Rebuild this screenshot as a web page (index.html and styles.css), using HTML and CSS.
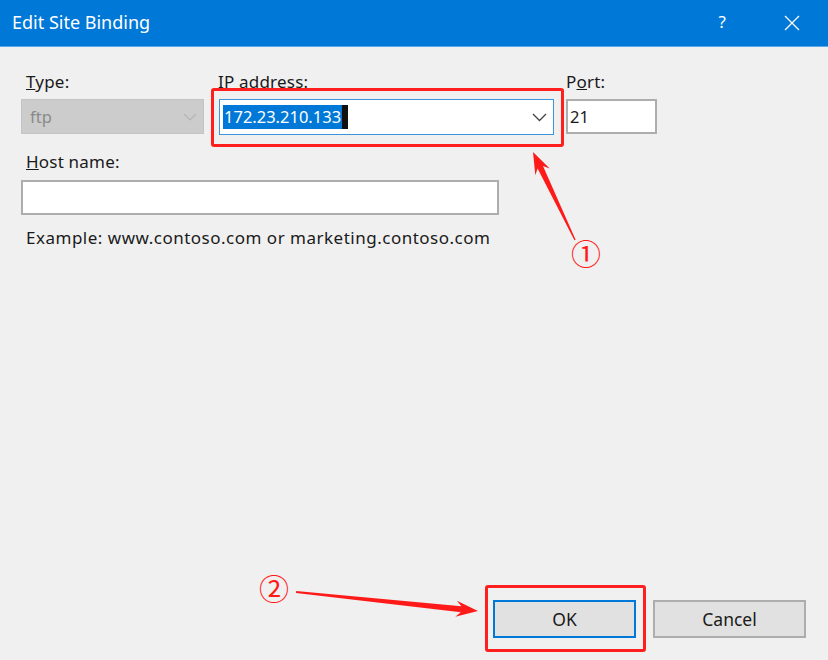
FILE: index.html
```html
<!DOCTYPE html>
<html>
<head>
<meta charset="utf-8">
<link rel="stylesheet" href="styles.css">
</head>
<body>
<div class="window">
  <div class="titlebar">
    <span class="title">Edit Site Binding</span>
    <span class="tb-actions">
      <span class="tb-help">?</span>
      <svg class="tb-close" width="16" height="16" viewBox="0 0 16 16"><path d="M1 1 L15 15 M15 1 L1 15" stroke="#fff" stroke-width="1.3" fill="none"/></svg>
    </span>
  </div>
  <div class="content">
    <div class="row">
      <div class="field f-type">
        <label class="lbl"><u>T</u>ype:</label>
        <div class="combo disabled">
          <span class="val">ftp</span>
          <svg class="chev" width="14" height="8" viewBox="0 0 14 8"><path d="M1 1 L7 7 L13 1" stroke="#b4b4b4" stroke-width="1.2" fill="none"/></svg>
        </div>
      </div>
      <div class="field f-ip">
        <label class="lbl"><u>I</u>P address:</label>
        <div class="combo focused">
          <span class="val"><span class="sel">172.23.210.133</span><span class="caret"></span></span>
          <svg class="chev" width="15" height="9" viewBox="0 0 15 9"><path d="M1 1 L7.5 7.5 L14 1" stroke="#444" stroke-width="1.3" fill="none"/></svg>
        </div>
      </div>
      <div class="field f-port">
        <label class="lbl">P<u>o</u>rt:</label>
        <div class="textbox"><span class="val">21</span></div>
      </div>
    </div>
    <div class="field f-host">
      <label class="lbl"><u>H</u>ost name:</label>
      <div class="textbox"></div>
    </div>
    <div class="example">Example: www.contoso.com or marketing.contoso.com</div>
  </div>
  <div class="buttons">
    <button class="btn btn-ok">OK</button>
    <button class="btn">Cancel</button>
  </div>

  <div class="mark mark-ip"></div>
  <div class="mark mark-ok"></div>
  <span class="num num1">①</span>
  <span class="num num2">②</span>
  <svg class="arrows" width="828" height="660" viewBox="0 0 828 660">
    <polygon fill="#ff1a1a" points="533,152 549.7,168.4 543.0,166.0 575.6,239.7 574.4,240.3 537.6,168.6 535.3,175.2"/>
    <polygon fill="#ff1a1a" points="478,611 455.3,616.7 460.8,612.2 296,593 296.2,591 461.4,606.2 456.9,600.7"/>
  </svg>
</div>
</body>
</html>
```
FILE: styles.css
```css
* { box-sizing: border-box; }
html, body { margin: 0; padding: 0; }
body {
  width: 828px;
  height: 660px;
  background: #f0f0f0;
  font-family: "Noto Sans", "Open Sans", sans-serif;
  color: #1a1a1a;
  overflow: hidden;
}
.window {
  position: relative;
  width: 828px;
  height: 660px;
  display: flex;
  flex-direction: column;
}
.titlebar {
  height: 47px;
  flex: none;
  background: #0078d7;
  border-bottom: 1px solid #5aa8e8;
  display: flex;
  align-items: center;
  justify-content: space-between;
  padding: 0 28px 0 12px;
  color: #fff;
}
.title {
  font-size: 18px;
  margin-top: -2px;
}
.tb-actions {
  display: flex;
  align-items: center;
  gap: 58px;
}
.tb-help {
  font-size: 17px;
  margin-top: -4px;
}
.tb-close { display: block; }
.content {
  flex: 1;
  padding: 25px 22px 0 21px;
  font-size: 17px;
}
.row {
  display: flex;
  align-items: flex-start;
}
.field { display: flex; flex-direction: column; }
.lbl {
  display: block;
  height: 20px;
  line-height: 20px;
  padding-left: 5px;
  color: #1a1a1a;
  margin-bottom: 6px;
  letter-spacing: 0.2px;
}
.f-type { width: 183px; margin-right: 14px; }
.f-type .combo { margin-top: 1px; }
.f-ip { width: 336px; margin-right: 12px; }
.f-ip .lbl { padding-left: 0; margin-bottom: 7px; }
.f-ip .combo { margin-left: 1px; height: 36px; }
.f-port { width: 91px; }
.f-port .lbl { padding-left: 0; }
.f-port .textbox { margin-top: 1px; }
.combo {
  height: 35px;
  display: flex;
  align-items: center;
  justify-content: space-between;
  padding: 0 6px 0 3px;
}
.combo.disabled {
  background: #cccccc;
  border: 1px solid #c4c4c4;
  color: #8a8a8a;
  padding-left: 8px;
}
.combo.focused {
  background: #fff;
  border: 1px solid #3c94dc;
  padding-left: 3px;
}
.val { font-size: 16.5px; display: flex; align-items: center; }
.sel {
  background: #0078d7;
  color: #fff;
  line-height: 24px;
  height: 24px;
  padding: 0 1px;
}
.caret {
  display: inline-block;
  width: 6px;
  height: 24px;
  background: #111;
}
.chev { display: block; }
.textbox {
  height: 35px;
  background: #fff;
  border: 2px solid #adadad;
  display: flex;
  align-items: center;
  padding-left: 2px;
}
.f-host { margin-top: 17px; width: 478px; }
.f-host .lbl { margin-bottom: 8px; }
.example {
  margin-top: 11px;
  padding-left: 5px;
  font-size: 17px;
  letter-spacing: 0.5px;
}
.buttons {
  flex: none;
  display: flex;
  justify-content: flex-end;
  gap: 17px;
  padding: 0 22px 22px 0;
}
.btn {
  height: 38px;
  width: 153px;
  background: #e1e1e1;
  border: 2px solid #adadad;
  font-family: inherit;
  font-size: 17.5px;
  color: #1a1a1a;
  padding: 0;
}
.btn-ok {
  width: 143px;
  border-color: #0078d7;
}
.mark {
  position: absolute;
  border: 3px solid #ff1f1f;
  border-radius: 3px;
}
.mark-ip { left: 211px; top: 88px; width: 353px; height: 59px; }
.mark-ok { left: 485px; top: 585px; width: 161px; height: 67px; }
.num {
  position: absolute;
  color: #ff1a1a;
  font-family: "Noto Sans CJK SC", sans-serif;
  font-size: 30px;
  line-height: 30px;
}
.num1 { left: 571px; top: 237px; }
.num2 { left: 259px; top: 572px; }
.arrows {
  position: absolute;
  left: 0;
  top: 0;
  pointer-events: none;
}
```
